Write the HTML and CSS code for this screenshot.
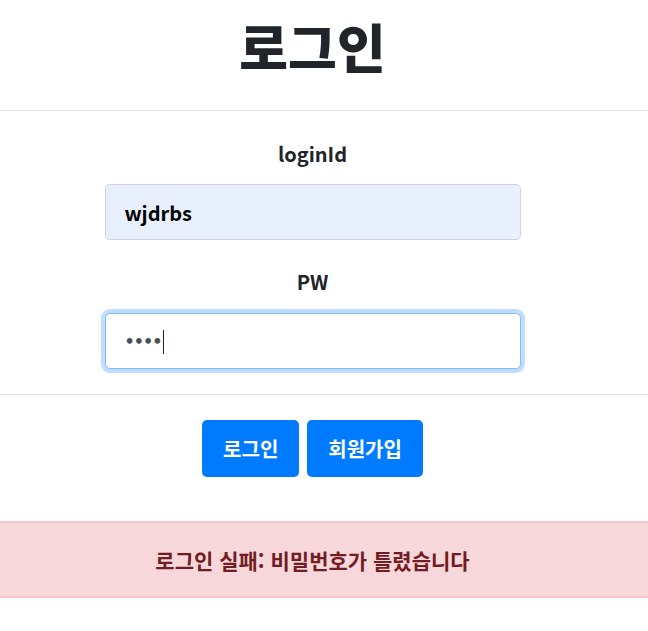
FILE: index.html
```html
<!DOCTYPE html>
<html lang="ko">
<head>
<meta charset="utf-8">
<title>로그인</title>
<link rel="stylesheet" href="styles.css">
</head>
<body>
<header class="header">
  <h1 class="title">로그인</h1>
</header>
<form class="form">
  <section class="fields">
    <label class="label" for="loginId">loginId</label>
    <input class="input input-filled" id="loginId" type="text" value="wjdrbs">
    <label class="label label-pw" for="pw">PW</label>
    <div class="input-wrap">
      <input class="input input-focus" id="pw" type="password" value="1234">
      <span class="caret"></span>
    </div>
  </section>
  <section class="actions">
    <button class="btn" type="button">로그인</button>
    <button class="btn" type="button">회원가입</button>
  </section>
</form>
<div class="alert">로그인 실패: 비밀번호가 틀렸습니다</div>
</body>
</html>
```
FILE: styles.css
```css
* { box-sizing: border-box; }
html, body {
  margin: 0;
  padding: 0;
  background: #fff;
  font-family: "Noto Sans CJK KR", "Noto Sans", sans-serif;
  color: #212529;
}
.header {
  padding: 14px 23px 32px 0;
  border-bottom: 1px solid #e3e3e3;
  text-align: center;
}
.title {
  margin: 0;
  font-size: 53px;
  line-height: 64px;
  font-weight: 900;
  color: #212529;
}
.form {
  display: flex;
  flex-direction: column;
}
.fields {
  display: flex;
  flex-direction: column;
  align-items: center;
  padding: 28px 23px 25px 0;
  border-bottom: 1px solid #e3e3e3;
}
.label {
  font-size: 20px;
  line-height: 30px;
  font-weight: 700;
  color: #212529;
  margin-bottom: 15px;
}
.label-pw {
  margin-top: 27px;
  margin-bottom: 16px;
}
.input-wrap {
  position: relative;
}
.input {
  display: block;
  width: 416px;
  height: 56px;
  padding: 0 19px;
  border: 1px solid #ced4da;
  border-radius: 5px;
  font-family: "Noto Sans CJK KR", "Noto Sans", sans-serif;
  font-size: 20px;
  font-weight: 700;
  color: #000;
  background: #fff;
  outline: none;
}
.input-filled {
  background: #e8f0fe;
}
.input-focus {
  border-color: #80bdff;
  box-shadow: 0 0 0 4px rgba(0, 123, 255, 0.25);
  color: #495057;
  font-family: "DejaVu Sans", sans-serif;
  font-size: 16px;
  letter-spacing: -1px;
  caret-color: transparent;
}
.caret {
  position: absolute;
  left: 58px;
  top: 17px;
  width: 1px;
  height: 24px;
  background: #222;
}
.actions {
  display: flex;
  justify-content: center;
  gap: 8px;
  padding: 25px 23px 0 0;
  margin-bottom: 44px;
}
.btn {
  height: 57px;
  padding: 0 21px;
  border: none;
  border-radius: 5px;
  background: #007bff;
  color: #fff;
  font-family: "Noto Sans CJK KR", "Noto Sans", sans-serif;
  font-size: 20px;
  font-weight: 700;
  cursor: pointer;
}
.alert {
  height: 77px;
  display: flex;
  align-items: center;
  justify-content: center;
  padding-right: 23px;
  background: #f8d7da;
  border-top: 2px solid #f5c6cb;
  border-bottom: 2px solid #f5c6cb;
  color: #721c24;
  font-size: 21px;
  font-weight: 700;
}
```
